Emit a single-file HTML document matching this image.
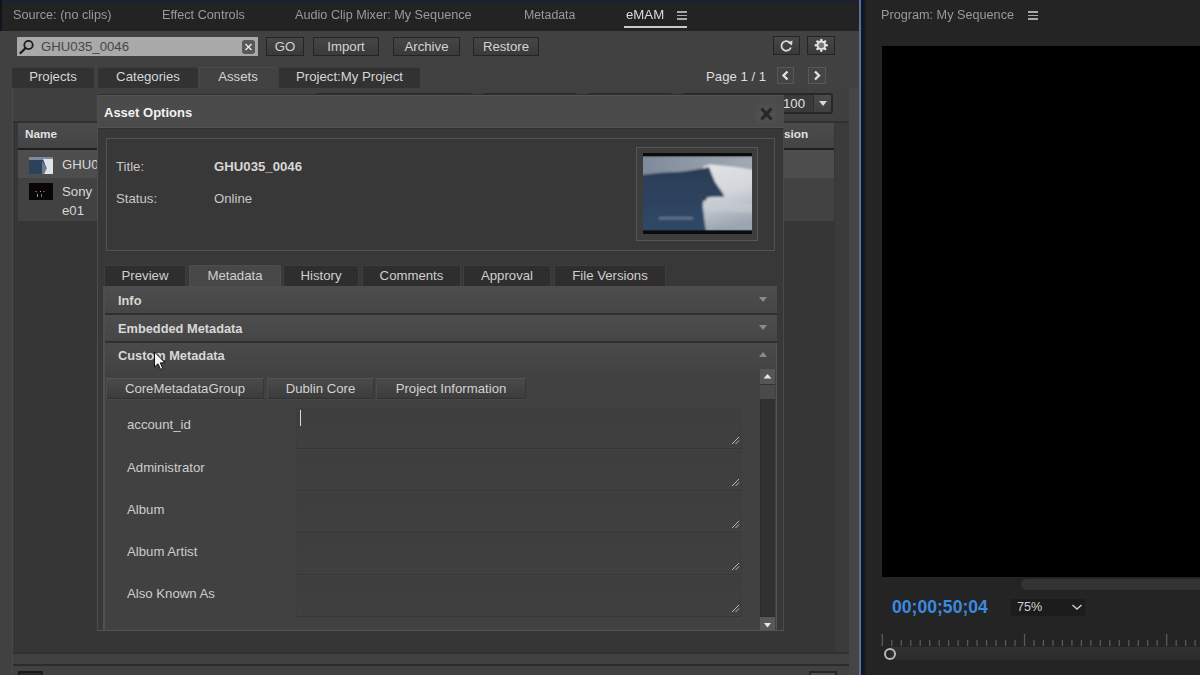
<!DOCTYPE html>
<html><head><meta charset="utf-8">
<style>
*{margin:0;padding:0;box-sizing:border-box}
html,body{width:1200px;height:675px;overflow:hidden;background:#1c1c1c;font-family:"Liberation Sans",sans-serif}
.a{position:absolute}
.t{position:absolute;white-space:nowrap;line-height:1}
.hd{font-size:13.7px;color:#9a9a9a;transform:scaleX(0.925);transform-origin:0 0}
.e{font-size:13.2px;color:#d2d2d2}
.btn{position:absolute;border:1px solid #242424;background:linear-gradient(#464646,#3a3a3a);color:#d4d4d4;font-size:13.2px;text-align:center;line-height:17px}
.tab{position:absolute;background:#323232;color:#d6d6d6;font-size:13.2px;text-align:center;line-height:18px;border-top:1px solid #3c3c3c}
.dtab{position:absolute;background:#2e2e2e;color:#cfcfcf;font-size:13.2px;text-align:center;line-height:20px;border:1px solid #3e3e3e;border-bottom:none;border-radius:2px 2px 0 0}
.acc{position:absolute;left:105px;width:672px;background:linear-gradient(#4d4d4d,#464646);border-bottom:2px solid #2f2f2f}
.acct{position:absolute;left:13px;font-size:12.8px;font-weight:bold;color:#d8d8d8;line-height:1}
.stab{position:absolute;top:378px;height:21px;background:linear-gradient(#4a4a4a,#3c3c3c);border-top:1px solid #545454;border-left:1px solid #4c4c4c;border-right:1px solid #363636;border-bottom:1px solid #323232;box-shadow:0 1px 0 #484848;color:#d2d2d2;font-size:13.2px;text-align:center;line-height:19px}
.lbl{position:absolute;left:127px;font-size:13.2px;color:#cdcdcd;line-height:1;white-space:nowrap}
.ta{position:absolute;left:296px;width:446px;height:41px;background:linear-gradient(#3e3e3e,#404040);border:1px solid #3d3d3d;border-bottom-color:#373737}
.rh{position:absolute;right:1px;bottom:1px;width:8px;height:8px}
</style></head><body>

<!-- ============ LEFT PANEL (eMAM) ============ -->
<div class="a" style="left:0;top:0;width:860px;height:675px;background:#414141"></div>
<div class="a" style="left:0;top:0;width:860px;height:31px;background:#232323"></div>
<div class="a" style="left:0;top:0;width:860px;height:2px;background:#182234"></div>
<div class="a" style="left:0;top:0;width:2px;height:31px;background:#10141c"></div>

<div class="t hd" style="left:13px;top:8px">Source: (no clips)</div>
<div class="t hd" style="left:162px;top:8px">Effect Controls</div>
<div class="t hd" style="left:295px;top:8px">Audio Clip Mixer: My Sequence</div>
<div class="t hd" style="left:524px;top:8px;transform:scaleX(0.9)">Metadata</div>
<div class="t hd" style="left:626px;top:8px;color:#dcdcdc;transform:scaleX(0.965)">eMAM</div>
<div class="a" style="left:677px;top:11px;width:10px;height:1.6px;background:#a8a8a8"></div>
<div class="a" style="left:677px;top:14.6px;width:10px;height:1.6px;background:#a8a8a8"></div>
<div class="a" style="left:677px;top:18.2px;width:10px;height:1.6px;background:#a8a8a8"></div>
<div class="a" style="left:624px;top:26px;width:63px;height:2px;background:#c9c9c9"></div>

<!-- search -->
<div class="a" style="left:17px;top:37px;width:241px;height:19px;background:#a9a9a9"></div>
<svg class="a" style="left:18px;top:38px" width="18" height="18" viewBox="0 0 18 18"><circle cx="10.5" cy="7" r="4.2" fill="none" stroke="#1c1c1c" stroke-width="1.8"/><line x1="7.6" y1="10" x2="2.5" y2="15" stroke="#1c1c1c" stroke-width="2.2" stroke-linecap="round"/></svg>
<div class="t" style="left:41px;top:40px;font-size:13.2px;color:#474747">GHU035_0046</div>
<div class="a" style="left:242px;top:40px;width:13px;height:14px;background:#585858;border-radius:3px"></div>
<svg class="a" style="left:242px;top:40px" width="13" height="14" viewBox="0 0 13 14"><path d="M3.5 4 L9.5 10 M9.5 4 L3.5 10" stroke="#e8e8e8" stroke-width="1.4"/></svg>

<div class="btn" style="left:266px;top:37px;width:38px;height:19px">GO</div>
<div class="btn" style="left:313px;top:37px;width:66px;height:19px">Import</div>
<div class="btn" style="left:393px;top:37px;width:67px;height:19px">Archive</div>
<div class="btn" style="left:473px;top:37px;width:66px;height:19px">Restore</div>
<div class="btn" style="left:773px;top:36px;width:27px;height:19px"></div>
<svg class="a" style="left:773px;top:36px" width="27" height="19" viewBox="0 0 27 19"><path d="M17.2 7.2 A4.8 4.8 0 1 0 17.8 11.5" fill="none" stroke="#d8d8d8" stroke-width="1.8"/><path d="M14.5 6.5 L19.5 4.5 L19 9.5 Z" fill="#d8d8d8"/></svg>
<div class="btn" style="left:807px;top:36px;width:28px;height:19px"></div>
<svg class="a" style="left:807px;top:36px" width="28" height="19" viewBox="0 0 28 19"><g fill="#e4e4e4"><circle cx="14.3" cy="9.3" r="4.8"/><circle cx="19.70" cy="9.30" r="1.25"/><circle cx="18.12" cy="13.12" r="1.25"/><circle cx="14.30" cy="14.70" r="1.25"/><circle cx="10.48" cy="13.12" r="1.25"/><circle cx="8.90" cy="9.30" r="1.25"/><circle cx="10.48" cy="5.48" r="1.25"/><circle cx="14.30" cy="3.90" r="1.25"/><circle cx="18.12" cy="5.48" r="1.25"/></g><circle cx="14.3" cy="9.3" r="2.9" fill="#777"/></svg>

<!-- main tabs -->
<div class="tab" style="left:12px;top:67px;width:82px;height:21px">Projects</div>
<div class="tab" style="left:98px;top:67px;width:100px;height:21px">Categories</div>
<div class="tab" style="left:198px;top:67px;width:78px;height:21px;background:#424242;border-top-color:#4a4a4a;border-left:2px solid #464646">Assets</div>
<div class="tab" style="left:279px;top:67px;width:141px;height:21px">Project:My Project</div>

<div class="t e" style="left:706px;top:70px;color:#dedede">Page 1 / 1</div>
<div class="a" style="left:777px;top:67px;width:17px;height:17px;border:1px solid #585858;background:#444"></div>
<svg class="a" style="left:777px;top:67px" width="17" height="17"><path d="M10.5 4.5 L6.5 8.5 L10.5 12.5" fill="none" stroke="#e0e0e0" stroke-width="2.4"/></svg>
<div class="a" style="left:808px;top:67px;width:18px;height:17px;border:1px solid #585858;background:#444"></div>
<svg class="a" style="left:808px;top:67px" width="18" height="17"><path d="M7 4.5 L11 8.5 L7 12.5" fill="none" stroke="#e0e0e0" stroke-width="2.4"/></svg>

<!-- content panel -->
<div class="a" style="left:12px;top:88px;width:838px;height:566px;background:#363636;border-left:1px solid #494949"></div>
<div class="a" style="left:13px;top:88px;width:837px;height:33px;background:#404040"></div>
<div class="a" style="left:13px;top:121px;width:837px;height:2px;background:#303030"></div>
<div class="a" style="left:835px;top:123px;width:14px;height:531px;background:#3b3b3b"></div>
<div class="a" style="left:849px;top:88px;width:10px;height:587px;background:#454545"></div>
<!-- dropdown 100 -->
<div class="a" style="left:682px;top:93px;width:151px;height:21px;background:#3a3a3a;border:2px solid #272727;border-radius:3px"></div>
<div class="a" style="left:814px;top:95px;width:17px;height:17px;background:linear-gradient(#4a4a4a,#404040)"></div>
<div class="t e" style="left:783px;top:97px;color:#e0e0e0">100</div>
<div class="a" style="left:813px;top:95px;width:1px;height:17px;background:#2e2e2e"></div>
<svg class="a" style="left:815px;top:95px" width="16" height="17"><path d="M4 6 L12 6 L8 11 Z" fill="#d8d8d8"/></svg>
<div class="a" style="left:315px;top:93px;width:157px;height:2px;background:#2c2c2c;border-radius:2px 2px 0 0"></div>
<div class="a" style="left:482px;top:93px;width:95px;height:2px;background:#2c2c2c;border-radius:2px 2px 0 0"></div>
<div class="a" style="left:587px;top:93px;width:85px;height:2px;background:#2c2c2c;border-radius:2px 2px 0 0"></div>
<!-- table -->
<div class="a" style="left:18px;top:123px;width:816px;height:26px;background:linear-gradient(#4b4b4b,#444)"></div>
<div class="t" style="left:25px;top:129px;font-size:11.8px;font-weight:bold;color:#e0e0e0">Name</div>
<div class="t" style="left:784px;top:129px;font-size:11.8px;font-weight:bold;color:#e0e0e0">sion</div>
<div class="a" style="left:18px;top:148px;width:816px;height:2px;background:#1f1f1f"></div>
<div class="a" style="left:18px;top:150px;width:816px;height:28px;background:#4d4d4d"></div>
<div class="a" style="left:18px;top:178px;width:816px;height:43px;background:#424242"></div>
<svg class="a" style="left:29px;top:157px" width="24" height="17" viewBox="0 0 24 17"><rect width="24" height="17" fill="#2d405e"/><rect width="24" height="3" fill="#7d8aa0"/><path d="M14 2 L24 2 L24 17 L15 17 L17 10 Z" fill="#dfe2e6"/><path d="M13 4 L18 11 L15 17 L13 17 Z" fill="#6c7a8c"/></svg>
<div class="t e" style="left:62px;top:158px;color:#d8d8d8">GHU035_0046</div>
<svg class="a" style="left:29px;top:183px" width="24" height="17"><rect width="24" height="17" fill="#080606"/><rect x="6" y="8" width="2" height="1" fill="#8a5050"/><rect x="11" y="8" width="1" height="1" fill="#aaa"/><rect x="8" y="11" width="1" height="3" fill="#999"/><rect x="12" y="11" width="1" height="3" fill="#777"/><rect x="14" y="8" width="2" height="1" fill="#7a4545"/></svg>
<div class="t e" style="left:62px;top:185px;color:#d8d8d8">Sony</div>
<div class="t e" style="left:62px;top:204px;color:#d8d8d8">e01</div>

<!-- bottom bar -->
<div class="a" style="left:12px;top:88px;width:1px;height:587px;background:#4a4a4a"></div>
<div class="a" style="left:13px;top:652px;width:836px;height:2px;background:#313131"></div>
<div class="a" style="left:13px;top:664px;width:836px;height:2px;background:#2c2c2c"></div>
<div class="a" style="left:18px;top:671px;width:25px;height:6px;border:2px solid #1a1a1a;border-bottom:none;background:#2a2a2a"></div>
<div class="a" style="left:809px;top:671px;width:28px;height:6px;border:2px solid #262626;border-bottom:none;background:#4e4e4e"></div>

<!-- ============ DIALOG ============ -->
<div class="a" style="left:97px;top:94px;width:687px;height:537px;background:#383838;border-top:1px solid #2e2e2e;border-left:1px solid #4e4e4e"></div>
<div class="a" style="left:98px;top:95px;width:686px;height:34px;background:#4b4b4b;border-top:1px solid #545454;border-bottom:1px solid #303030;box-shadow:inset 0 -1px 0 #525252"></div>
<div class="t" style="left:104px;top:106px;font-size:13px;font-weight:bold;color:#f2f2f2">Asset Options</div>
<div class="a" style="left:757px;top:105px;width:19px;height:18px;background:#505050;filter:blur(2px)"></div>
<svg class="a" style="left:757px;top:105px" width="19" height="18" viewBox="0 0 19 18"><path d="M4.5 3.5 L14.5 14.5 M14.5 3.5 L4.5 14.5" stroke="#272727" stroke-width="3.2" stroke-linecap="butt"/></svg>

<div class="a" style="left:106px;top:138px;width:669px;height:113px;border:1px solid #525252"></div>
<div class="t e" style="left:116px;top:160px;color:#c8c8c8">Title:</div>
<div class="t e" style="left:214px;top:160px;font-weight:bold;color:#d6d6d6">GHU035_0046</div>
<div class="t e" style="left:116px;top:192px;color:#c8c8c8">Status:</div>
<div class="t e" style="left:214px;top:192px;color:#c8c8c8">Online</div>
<div class="a" style="left:636px;top:147px;width:122px;height:94px;border:1px solid #565656;background:#3d3d3d"></div>
<svg class="a" style="left:643px;top:153px" width="109" height="81" viewBox="0 0 109 81">
<defs><filter id="bl" x="-10%" y="-10%" width="120%" height="120%"><feGaussianBlur stdDeviation="1.2"/></filter>
<linearGradient id="sky" x1="0" x2="1"><stop offset="0" stop-color="#7e899a"/><stop offset="1" stop-color="#a3aab4"/></linearGradient>
<linearGradient id="foam" x1="0" y1="0" x2="0.2" y2="1"><stop offset="0" stop-color="#e2e5e7"/><stop offset="0.5" stop-color="#d2d6da"/><stop offset="1" stop-color="#9ca6b1"/></linearGradient>
<linearGradient id="face" x1="0" y1="0" x2="0" y2="1"><stop offset="0" stop-color="#2c3d55"/><stop offset="1" stop-color="#2f4869"/></linearGradient></defs>
<rect width="109" height="81" fill="#0c0c0c"/>
<g filter="url(#bl)">
<rect x="-2" y="3" width="113" height="75" fill="url(#sky)"/>
<path d="M60 14 Q66 10 72 12 Q90 13 111 17 L111 78 L58 78 Z" fill="url(#foam)"/>
<path d="M-2 22 Q20 19 35 19 Q54 17 66 14 Q69 22 72 29 Q76 35 79 39 Q81 42 81 44 Q72 43 62 45 Q59 50 60 55 Q61 66 63 78 L-2 78 Z" fill="url(#face)"/>
<path d="M62 46 Q70 50 82 45 Q95 52 111 50 L111 60 Q90 58 63 58 Z" fill="#c8cdd3" opacity="0.6"/>
<circle cx="62" cy="46" r="1.5" fill="#1a2230"/>
<rect x="16" y="64" width="34" height="2.4" fill="#7b899e" opacity="0.75"/>
</g>
<rect width="109" height="3" fill="#0c0c0c"/><rect y="77.5" width="109" height="3.5" fill="#0c0c0c"/>
</svg>

<!-- dialog tabs -->
<div class="dtab" style="left:104px;top:265px;width:82px;height:21px">Preview</div>
<div class="dtab" style="left:189px;top:265px;width:92px;height:21px;background:#474747;border-color:#4e4e4e">Metadata</div>
<div class="dtab" style="left:283px;top:265px;width:76px;height:21px">History</div>
<div class="dtab" style="left:362px;top:265px;width:99px;height:21px">Comments</div>
<div class="dtab" style="left:463px;top:265px;width:88px;height:21px">Approval</div>
<div class="dtab" style="left:554px;top:265px;width:112px;height:21px">File Versions</div>

<!-- accordion -->
<div class="a" style="left:103px;top:286px;width:2px;height:345px;background:#4e4e4e"></div>
<div class="acc" style="top:286px;height:29px"><div class="acct" style="top:9px">Info</div></div>
<svg class="a" style="left:758px;top:296px" width="10" height="8"><path d="M1 1 L9 1 L5 6 Z" fill="#8a8a8a"/></svg>
<div class="acc" style="top:315px;height:28px"><div class="acct" style="top:8px">Embedded Metadata</div></div>
<svg class="a" style="left:758px;top:324px" width="10" height="8"><path d="M1 1 L9 1 L5 6 Z" fill="#8a8a8a"/></svg>
<div class="a" style="left:103px;top:343px;width:674px;height:288px;background:#414141;border-left:2px solid #505050"></div>
<div class="a" style="left:105px;top:343px;width:672px;height:34px;background:linear-gradient(#4a4a4a,#414141)"></div>
<div class="acct" style="left:118px;top:350px">Custom Metadata</div>
<svg class="a" style="left:758px;top:350px" width="10" height="8"><path d="M1 7 L9 7 L5 2 Z" fill="#8a8a8a"/></svg>

<div class="stab" style="left:106px;width:158px">CoreMetadataGroup</div>
<div class="stab" style="left:267px;width:107px">Dublin Core</div>
<div class="stab" style="left:376px;width:150px">Project Information</div>

<div class="lbl" style="top:418px">account_id</div>
<div class="lbl" style="top:461px">Administrator</div>
<div class="lbl" style="top:503px">Album</div>
<div class="lbl" style="top:545px">Album Artist</div>
<div class="lbl" style="top:587px">Also Known As</div>

<div class="ta" style="top:408px"></div>
<div class="ta" style="top:450px"></div>
<div class="ta" style="top:492px"></div>
<div class="ta" style="top:534px"></div>
<div class="ta" style="top:576px"></div>
<div class="a" style="left:300px;top:410px;width:1px;height:16px;background:#d8d8d8"></div>
<svg class="a" style="left:731px;top:436px" width="9" height="9"><path d="M1 8 L8 1 M4.5 8 L8 4.5" stroke="#bbb" stroke-width="1"/></svg>
<svg class="a" style="left:731px;top:478px" width="9" height="9"><path d="M1 8 L8 1 M4.5 8 L8 4.5" stroke="#bbb" stroke-width="1"/></svg>
<svg class="a" style="left:731px;top:520px" width="9" height="9"><path d="M1 8 L8 1 M4.5 8 L8 4.5" stroke="#bbb" stroke-width="1"/></svg>
<svg class="a" style="left:731px;top:562px" width="9" height="9"><path d="M1 8 L8 1 M4.5 8 L8 4.5" stroke="#bbb" stroke-width="1"/></svg>
<svg class="a" style="left:731px;top:604px" width="9" height="9"><path d="M1 8 L8 1 M4.5 8 L8 4.5" stroke="#bbb" stroke-width="1"/></svg>

<!-- scrollbar -->
<div class="a" style="left:760px;top:369px;width:15px;height:262px;background:#313131;border-left:1px solid #2a2a2a"></div>
<div class="a" style="left:760px;top:369px;width:15px;height:15px;background:#565656"></div>
<svg class="a" style="left:760px;top:369px" width="15" height="15"><path d="M3.5 9.5 L11.5 9.5 L7.5 5 Z" fill="#e8e8e8"/></svg>
<div class="a" style="left:760px;top:384px;width:15px;height:15px;background:#4a4a4a;border-top:1px solid #333"></div>
<div class="a" style="left:760px;top:616px;width:15px;height:15px;background:#585858;border-top:1px solid #2e2e2e"></div>
<svg class="a" style="left:760px;top:617px" width="15" height="14"><path d="M4 6 L11 6 L7.5 10.5 Z" fill="#e8e8e8"/></svg>
<div class="a" style="left:776px;top:343px;width:1px;height:288px;background:#555"></div>
<div class="a" style="left:783px;top:129px;width:1px;height:502px;background:#4a4a4a"></div>
<div class="a" style="left:97px;top:630px;width:687px;height:1px;background:#525252"></div>

<!-- cursor -->
<svg class="a" style="left:153px;top:351px" width="14" height="20" viewBox="0 0 14 20"><path d="M1.5 1 L1.5 16 L5 12.8 L7.6 18.4 L9.8 17.4 L7.3 11.9 L12 11.7 Z" fill="#f5f5f5" stroke="#111" stroke-width="1" stroke-linejoin="round"/></svg>

<!-- ============ SEPARATOR ============ -->
<div class="a" style="left:859px;top:0;width:2px;height:675px;background:#5b7094"></div>
<div class="a" style="left:861px;top:0;width:3px;height:675px;background:#0e1727"></div>
<div class="a" style="left:864px;top:0;width:2px;height:675px;background:#1b1b1b"></div>

<!-- ============ RIGHT PANEL ============ -->
<div class="a" style="left:866px;top:0;width:334px;height:675px;background:#242424"></div>
<div class="t hd" style="left:881px;top:8px">Program: My Sequence</div>
<div class="a" style="left:1028px;top:11px;width:10px;height:1.6px;background:#a8a8a8"></div>
<div class="a" style="left:1028px;top:14.6px;width:10px;height:1.6px;background:#a8a8a8"></div>
<div class="a" style="left:1028px;top:18.2px;width:10px;height:1.6px;background:#a8a8a8"></div>
<div class="a" style="left:882px;top:46px;width:318px;height:531px;background:#000"></div>
<div class="a" style="left:1021px;top:579px;width:190px;height:11px;background:#333;border-radius:5px"></div>
<div class="t" style="left:892px;top:599px;font-size:17.6px;font-weight:bold;color:#3b8ae0">00;00;50;04</div>
<div class="a" style="left:1011px;top:599px;width:74px;height:17px;background:#1c1c1c"></div>
<div class="t" style="left:1017px;top:601px;font-size:12.6px;color:#d0d0d0">75%</div>
<svg class="a" style="left:1071px;top:602px" width="12" height="10"><path d="M1.5 3 L6 7 L10.5 3" fill="none" stroke="#cfcfcf" stroke-width="1.4"/></svg>
<svg class="a" style="left:866px;top:630px" width="334" height="20"><rect x="15.70" y="4" width="1.2" height="12" fill="#5c5c5c"/><rect x="25.18" y="10" width="1.2" height="6" fill="#5c5c5c"/><rect x="34.66" y="10" width="1.2" height="6" fill="#5c5c5c"/><rect x="44.14" y="10" width="1.2" height="6" fill="#5c5c5c"/><rect x="53.62" y="10" width="1.2" height="6" fill="#5c5c5c"/><rect x="63.10" y="10" width="1.2" height="6" fill="#5c5c5c"/><rect x="72.58" y="10" width="1.2" height="6" fill="#5c5c5c"/><rect x="82.06" y="10" width="1.2" height="6" fill="#5c5c5c"/><rect x="91.54" y="10" width="1.2" height="6" fill="#5c5c5c"/><rect x="101.02" y="10" width="1.2" height="6" fill="#5c5c5c"/><rect x="110.50" y="10" width="1.2" height="6" fill="#5c5c5c"/><rect x="119.98" y="10" width="1.2" height="6" fill="#5c5c5c"/><rect x="129.46" y="10" width="1.2" height="6" fill="#5c5c5c"/><rect x="138.94" y="10" width="1.2" height="6" fill="#5c5c5c"/><rect x="148.42" y="10" width="1.2" height="6" fill="#5c5c5c"/><rect x="157.90" y="4" width="1.2" height="12" fill="#5c5c5c"/><rect x="167.38" y="10" width="1.2" height="6" fill="#5c5c5c"/><rect x="176.86" y="10" width="1.2" height="6" fill="#5c5c5c"/><rect x="186.34" y="10" width="1.2" height="6" fill="#5c5c5c"/><rect x="195.82" y="10" width="1.2" height="6" fill="#5c5c5c"/><rect x="205.30" y="10" width="1.2" height="6" fill="#5c5c5c"/><rect x="214.78" y="10" width="1.2" height="6" fill="#5c5c5c"/><rect x="224.26" y="10" width="1.2" height="6" fill="#5c5c5c"/><rect x="233.74" y="10" width="1.2" height="6" fill="#5c5c5c"/><rect x="243.22" y="10" width="1.2" height="6" fill="#5c5c5c"/><rect x="252.70" y="10" width="1.2" height="6" fill="#5c5c5c"/><rect x="262.18" y="10" width="1.2" height="6" fill="#5c5c5c"/><rect x="271.66" y="10" width="1.2" height="6" fill="#5c5c5c"/><rect x="281.14" y="10" width="1.2" height="6" fill="#5c5c5c"/><rect x="290.62" y="10" width="1.2" height="6" fill="#5c5c5c"/><rect x="300.10" y="4" width="1.2" height="12" fill="#5c5c5c"/><rect x="309.58" y="10" width="1.2" height="6" fill="#5c5c5c"/><rect x="319.06" y="10" width="1.2" height="6" fill="#5c5c5c"/><rect x="328.54" y="10" width="1.2" height="6" fill="#5c5c5c"/><rect x="338.02" y="10" width="1.2" height="6" fill="#5c5c5c"/><rect x="347.50" y="10" width="1.2" height="6" fill="#5c5c5c"/></svg>
<div class="a" style="left:890px;top:647px;width:310px;height:13px;background:linear-gradient(#323232,#2b2b2b)"></div>
<svg class="a" style="left:882px;top:646px" width="16" height="16"><circle cx="8" cy="8" r="5" fill="none" stroke="#b8b8b8" stroke-width="2"/></svg>


</body></html>
